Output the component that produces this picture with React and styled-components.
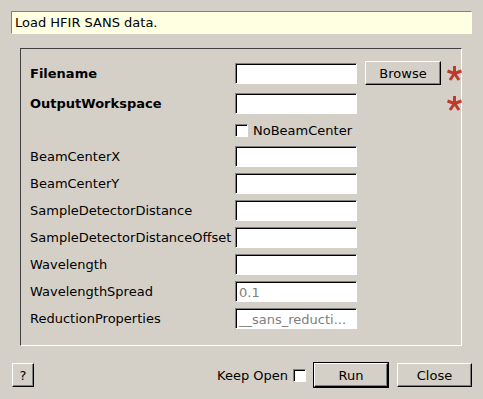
import React from 'react';
import styled, { createGlobalStyle } from 'styled-components';

const GlobalStyle = createGlobalStyle`
    html, body {
        margin: 0;
        padding: 0;
        background: #d4d0c8;
    }
    body {
        font-family: 'DejaVu Sans', 'Liberation Sans', sans-serif;
        font-size: 13px;
        color: #000;
    }
`;

const Dialog = styled.div`
    width: 483px;
    height: 399px;
    box-sizing: border-box;
    padding: 11px 11px 0 11px;
    background: #d4d0c8;
    display: flex;
    flex-direction: column;
`;

const HelpBanner = styled.div`
    height: 23px;
    box-sizing: border-box;
    background: #ffffe1;
    border-top: 1px solid #808080;
    border-left: 1px solid #808080;
    border-right: 1px solid #ffffff;
    border-bottom: 1px solid #ffffff;
    padding-left: 3px;
    display: flex;
    align-items: center;
`;

const GroupBox = styled.div`
    margin: 14px 10px 0 9px;
    height: 298px;
    box-sizing: border-box;
    border-top: 1px solid #404040;
    border-left: 1px solid #404040;
    border-right: 1px solid #ffffff;
    border-bottom: 1px solid #ffffff;
    padding: 12px 0 0 9px;
    display: flex;
    flex-direction: column;
    gap: 6px;
`;

const Row = styled.div`
    height: ${(p) => p.$h}px;
    display: flex;
    align-items: center;
`;

const Label = styled.div`
    width: 205px;
    flex: none;
    font-weight: ${(p) => (p.$bold ? 'bold' : 'normal')};
    white-space: nowrap;
`;

const TextInput = styled.div`
    width: 122px;
    height: 21px;
    flex: none;
    box-sizing: border-box;
    background: #ffffff;
    border-top: 1px solid #808080;
    border-left: 1px solid #808080;
    border-right: 1px solid #ffffff;
    border-bottom: 1px solid #ffffff;
    box-shadow: inset 1px 1px 0 #000000;
    padding: 1px 0 0 3px;
    color: #808080;
    display: flex;
    align-items: center;
    overflow: hidden;
    white-space: nowrap;
`;

const RaisedButton = styled.button`
    width: ${(p) => p.$w}px;
    height: 24px;
    flex: none;
    box-sizing: border-box;
    margin: 0;
    padding: 0;
    background: #d4d0c8;
    border-top: 1px solid #ffffff;
    border-left: 1px solid #ffffff;
    border-right: 1px solid #000000;
    border-bottom: 1px solid #000000;
    box-shadow: inset -1px -1px 0 #808080;
    font-family: 'DejaVu Sans', 'Liberation Sans', sans-serif;
    font-size: 13px;
    color: #000;
`;

const DefaultFrame = styled.div`
    border: 1px solid #000000;
    display: flex;
    flex: none;
`;

const ButtonSlot = styled.div`
    width: 90px;
    flex: none;
    display: flex;
    padding-left: 8px;
    box-sizing: border-box;
`;

const Check = styled.div`
    width: 13px;
    height: 13px;
    flex: none;
    box-sizing: border-box;
    background: #ffffff;
    border-top: 1px solid #808080;
    border-left: 1px solid #808080;
    border-right: 1px solid #ffffff;
    border-bottom: 1px solid #ffffff;
    box-shadow: inset 1px 1px 0 #000000;
`;

const CheckLabel = styled.span`
    margin-left: 5px;
`;

const Footer = styled.div`
    margin-top: 16px;
    height: 26px;
    display: flex;
    align-items: center;
    padding-left: 1px;
`;

const Spacer = styled.div`
    flex: 1;
`;

const KeepOpen = styled.div`
    display: flex;
    align-items: center;
    gap: 5px;
    margin-right: 7px;
`;

const CloseSlot = styled.div`
    margin-left: 8px;
    display: flex;
`;

const Star = () => (
    <svg width="15" height="16" viewBox="0 0 15 16" style={{ flex: 'none' }}>
        <g stroke="#c0392b" strokeWidth="3" strokeLinecap="butt">
            <line x1="7.5" y1="8.5" x2="7.5" y2="1" />
            <line x1="7.5" y1="8.5" x2="14.5" y2="6" />
            <line x1="7.5" y1="8.5" x2="12" y2="15" />
            <line x1="7.5" y1="8.5" x2="3" y2="15" />
            <line x1="7.5" y1="8.5" x2="0.5" y2="6" />
        </g>
    </svg>
);

const fields = [
    ['BeamCenterX', ''],
    ['BeamCenterY', ''],
    ['SampleDetectorDistance', ''],
    ['SampleDetectorDistanceOffset', ''],
    ['Wavelength', ''],
    ['WavelengthSpread', '0.1'],
    ['ReductionProperties', '__sans_reducti...'],
];

const App = () => (
    <Dialog>
        <GlobalStyle />
        <HelpBanner>Load HFIR SANS data.</HelpBanner>
        <GroupBox>
            <Row $h={24}>
                <Label $bold>Filename</Label>
                <TextInput />
                <ButtonSlot>
                    <RaisedButton $w={76}>Browse</RaisedButton>
                </ButtonSlot>
                <Star />
            </Row>
            <Row $h={24}>
                <Label $bold>OutputWorkspace</Label>
                <TextInput />
                <ButtonSlot />
                <Star />
            </Row>
            <Row $h={19}>
                <Label />
                <Check />
                <CheckLabel>NoBeamCenter</CheckLabel>
            </Row>
            {fields.map(([name, value]) => (
                <Row $h={21} key={name}>
                    <Label>{name}</Label>
                    <TextInput>{value}</TextInput>
                </Row>
            ))}
        </GroupBox>
        <Footer>
            <RaisedButton $w={22}>?</RaisedButton>
            <Spacer />
            <KeepOpen>
                Keep Open
                <Check />
            </KeepOpen>
            <DefaultFrame>
                <RaisedButton $w={74}>Run</RaisedButton>
            </DefaultFrame>
            <CloseSlot>
                <RaisedButton $w={75}>Close</RaisedButton>
            </CloseSlot>
        </Footer>
    </Dialog>
);

export default App;
